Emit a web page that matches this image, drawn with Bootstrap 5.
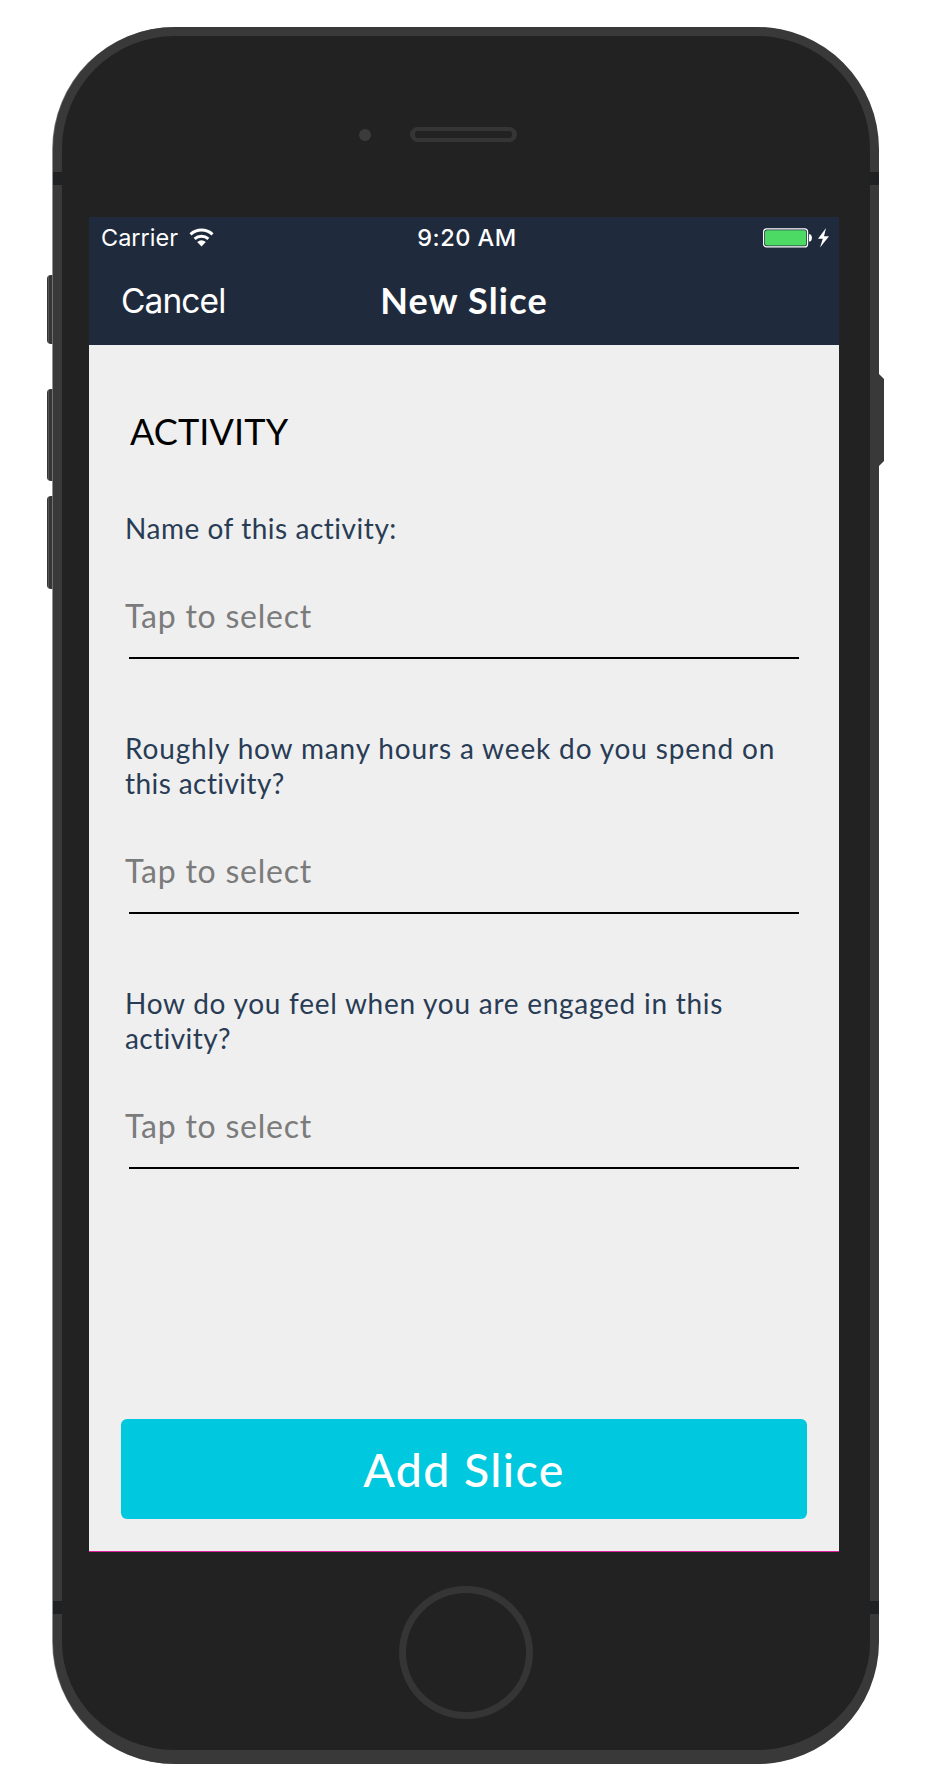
<!DOCTYPE html>
<html lang="en">
<head>
<meta charset="utf-8">
<meta name="viewport" content="width=device-width, initial-scale=1">
<title>New Slice</title>
<link href="https://cdn.jsdelivr.net/npm/bootstrap@5.3.0/dist/css/bootstrap.min.css" rel="stylesheet">
<style>
body{background:#fff;font-family:Lato,"Open Sans",sans-serif;height:1792px;overflow:hidden;font-variant-ligatures:none}
.device{width:826px;height:1737px;margin:27px 0 0 53px;background:#222;border:9px solid #393939;border-bottom-width:14px;border-radius:122px;box-shadow:-1px 0 0 -.2px #777}
.screen-area{width:750px;height:1335px;margin-left:27px;background:#efefef;border-bottom:1px solid #e020a0}
.sensors{height:181px;padding:91px 0 0 297px}
.camera{width:12px;height:12px;background:#3b3b3b;margin-top:2px}
.speaker{width:107px;height:15px;border:4px solid #353535;border-width:4px 5px;border-radius:9px;margin-left:39px}
.home{width:134px;height:133px;border:7px solid #353535;margin:34px 0 0 337px}
.hw{position:absolute;background:#393939}
.hw-left{left:-15px;width:6px;border-radius:4px 0 0 4px;background:linear-gradient(90deg,#333 0 1px,#555 1px 2px,#363636 2px 5px,#707070 5px)}
.hw-right{left:817px;width:5px;clip-path:polygon(0 0,100% 5px,100% 87px,0 100%)}
.band{left:-9px;width:9px;height:13px;background:#1f2122}
.band-r{left:808px}
.top-bars{height:128px;background:#1f2b3d;font-family:Inter,sans-serif}
.status{height:40px;font-size:23.5px;line-height:40px;padding-top:1px}
.wifi{margin-left:11px}
.nav-row{height:88px}
.status>*,.nav-row>*{flex:0 0 33.3333%}
.time{font-weight:500;letter-spacing:.5px;padding-left:6px}
.cancel{font-size:33.5px;padding-left:32px;line-height:89px;letter-spacing:-.9px}
.nav-title{font:700 36px/86px Lato,sans-serif;letter-spacing:1.2px}
.form-body{height:1206px;padding:0 32px 32px}
h2.section{font-size:36px;line-height:44px;color:#000;margin:64px 0 0 9px;letter-spacing:.12px}
.q{font-size:28px;line-height:35px;color:#293c55;padding-left:4px}
.ls-a{letter-spacing:.53px}
.ls-b{letter-spacing:.85px}
.ls-c{letter-spacing:.74px}
.ls-d{letter-spacing:.42px}
.tap{font-size:32px;line-height:40px;color:#7b7b7b;padding-left:4px;margin-top:50px;letter-spacing:.78px}
.rule{height:2px;background:#000;margin:21px 8px 0}
.add{height:100px;border-radius:6px;background:#00c8de;color:#fff;font-size:46.5px;line-height:100px;font-weight:500;letter-spacing:1.4px}
</style>
</head>
<body>
<main class="device position-relative">
  <i class="hw hw-left" style="top:239px;height:69px"></i>
  <i class="hw hw-left" style="top:353px;height:92px"></i>
  <i class="hw hw-left" style="top:460px;height:93px"></i>
  <i class="hw hw-right" style="top:338px;height:92px"></i>
  <i class="hw band" style="top:136px"></i><i class="hw band band-r" style="top:136px"></i>
  <i class="hw band" style="top:1565px"></i><i class="hw band band-r" style="top:1565px"></i>
  <div class="sensors d-flex align-items-start"><div class="camera rounded-circle"></div><div class="speaker"></div></div>
  <section class="screen-area">
    <header class="top-bars text-white">
      <div class="status d-flex">
        <div class="d-flex align-items-center" style="padding-left:12px"><span>Carrier</span>
          <svg width="26" height="20" viewBox="0 0 26 20" class="wifi" fill="none" stroke="#fff"><path d="M1.5 6.3a16.5 16.5 0 0 1 22 0" stroke-width="3"/><path d="M5.6 10.9a10.6 10.6 0 0 1 13.8 0" stroke-width="3"/><path d="M8.2 14.1a6.8 6.8 0 0 1 8.6 0L12.5 18.6z" fill="#fff" stroke="none"/></svg></div>
        <div class="time text-center">9:20 AM</div>
        <div class="d-flex align-items-center justify-content-end" style="padding-right:9px">
          <svg width="67" height="20" viewBox="0 0 67 20"><rect x=".6" y=".9" width="44" height="18" rx="3" fill="none" stroke="#fff" stroke-width="1.2"/><rect x="2" y="2.3" width="41.3" height="15.3" rx="2" fill="#4cd964"/><path d="M46 6.2h1c2.6 1 2.6 6.3 0 7.3h-1z" fill="#fff"/><path d="M63 0 55 10.8h4.8L57 19.5 66 8.2h-5z" fill="#fff"/></svg>
        </div>
      </div>
      <div class="nav-row d-flex">
        <div class="cancel">Cancel</div>
        <div class="nav-title text-center">New Slice</div>
        <div></div>
      </div>
    </header>
    <div class="form-body d-flex flex-column">
      <h2 class="section fw-normal">ACTIVITY</h2>
      <div class="q ls-a" style="margin-top:58px">Name of this activity:</div>
      <div class="tap">Tap to select</div>
      <div class="rule"></div>
      <div class="q" style="margin-top:72px"><span class="ls-b">Roughly how many hours a week do you spend on</span><br><span class="ls-d">this activity?</span></div>
      <div class="tap">Tap to select</div>
      <div class="rule"></div>
      <div class="q" style="margin-top:72px"><span class="ls-c">How do you feel when you are engaged in this</span><br><span class="ls-d">activity?</span></div>
      <div class="tap">Tap to select</div>
      <div class="rule"></div>
      <button class="add btn border-0 p-0 w-100 mt-auto">Add Slice</button>
    </div>
  </section>
  <div class="home rounded-circle"></div>
</main>
<script src="https://cdn.jsdelivr.net/npm/bootstrap@5.3.0/dist/js/bootstrap.bundle.min.js"></script>
</body>
</html>
